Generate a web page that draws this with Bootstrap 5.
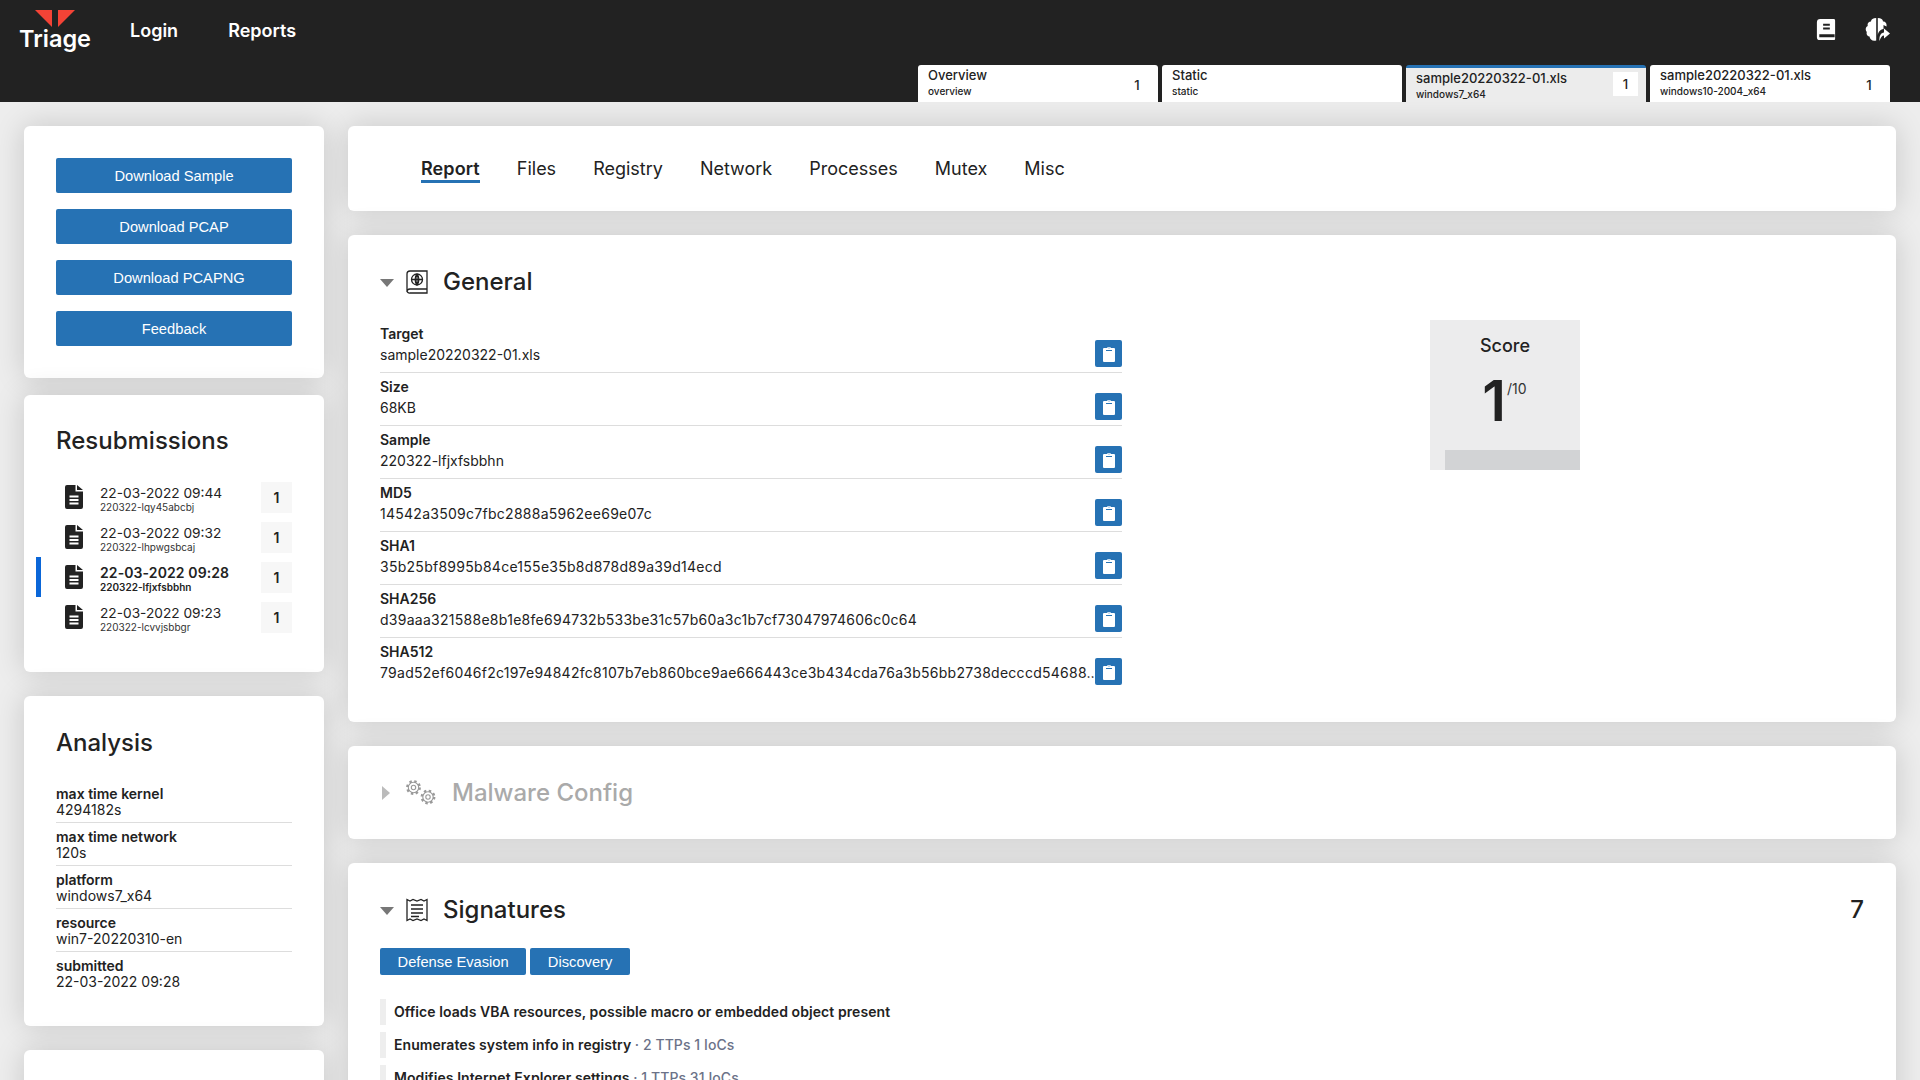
<!DOCTYPE html>
<html lang="en">
<head>
<meta charset="utf-8">
<title>Triage</title>
<link href="https://cdn.jsdelivr.net/npm/bootstrap@5.3.0/dist/css/bootstrap.min.css" rel="stylesheet">
<style>
html,body{height:100%;overflow:hidden}
body{font-family:Inter,"Liberation Sans",sans-serif;background:#ededed;color:#222;font-size:14px;line-height:17px}
.topbar{height:102px;background:#222;position:relative;padding:0 20px}
.brand{width:70px;padding-top:10px;color:#fff;display:block;text-decoration:none}
.brand svg{display:block;width:40px;height:17px;margin-left:15px}
.brand span{display:block;font-size:23.5px;line-height:24px;font-weight:600;margin-top:0;margin-left:-1px}
.toplink{color:#fff;font-size:18px;font-weight:600;line-height:22px;text-decoration:none}
.toplinks{gap:50px;margin-left:40px;padding-top:20px}
.topicons{gap:29px;padding-top:18px;position:absolute;right:30px;top:0}
.tabstrip{position:absolute;left:918px;top:65px;gap:4px}
.tabbox{width:240px;height:37px;background:#fff;border-radius:3px 3px 0 0;padding:2px 10px;display:flex;justify-content:space-between;align-items:flex-start;overflow:hidden}
.tabbox b{display:block;font-weight:500;font-size:13px;line-height:17px}
.tabbox small{display:block;font-size:10px;line-height:13px;font-weight:500;margin-top:1px}
.tabbox i{font-style:normal;font-size:13px;font-weight:500;width:24px;height:24px;display:block;text-align:center;line-height:24px;margin-top:6px;margin-right:-1px}
.tabbox.sel{background:#ececec;border-top:3px solid #2672b4;padding-top:2px;padding-right:8px}
.tabbox.sel i{background:#fff;margin-top:2px;margin-right:0;width:25px}
.shell{padding:24px;gap:24px;align-items:flex-start}
.rail{width:300px;flex:none}
.mainpane{flex:1;min-width:0}
.panel{background:#fff;border-radius:6px;box-shadow:0 0 30px rgba(0,0,0,.16)}
.rail .panel{margin-bottom:24px}
.rail .actions{margin-bottom:17px}
.mainpane .panel{margin-bottom:24px}
.actions{padding:32px;display:flex;flex-direction:column;gap:16px}
.bluebtn{background:#2672b4;border:0;border-radius:2px;color:#fff;font-family:"Liberation Sans",sans-serif;font-size:14.7px;height:35px;line-height:36px;padding:0;text-align:center;display:block}
.offtext{padding-left:10px}
.ptitle{font-size:24px;line-height:29px;font-weight:500;margin:0}
.resub{padding:31px 0 35px}
.resub .ptitle{padding-left:32px;margin-bottom:22px}
.rrow{height:40px;display:flex;align-items:center;padding-left:24px;padding-right:32px;border-left:5px solid transparent;margin-left:12px}
.rrow.sel{border-left-color:#0a66d8;font-weight:600}
.rtext{flex:1;padding-left:17px;padding-top:4px}
.rtext span{display:block;font-size:13.7px;line-height:16px}
.sel .rtext span{font-size:14px;letter-spacing:.1px}
.rtext small{display:block;font-size:10px;line-height:12px;color:#333}
.sel .rtext small{color:#222}
.rcount{width:31px;height:31px;background:#f7f7f7;text-align:center;line-height:31px;font-weight:600}
.analysis{padding:32px 32px 26px}
.analysis .ptitle{margin-bottom:28px}
.kv{height:38px;margin-bottom:5px;border-bottom:1px solid #ddd;line-height:16px}
.kv:last-child{border-bottom:0;margin-bottom:0;height:43px}
.kv b{display:block;font-weight:600;line-height:17px}
.stub{height:60px}
.tabsbar{height:85px;padding:0 73px;display:flex;align-items:center;gap:37px;font-size:18px}
.tabsbar a{color:#222;text-decoration:none;line-height:22px;border-bottom:3px solid transparent;margin-top:4px}
.tabsbar a.cur{font-weight:600;border-bottom-color:#2672b4;letter-spacing:.1px}
.sect{padding:32px}
.shead{display:flex;align-items:center;height:29px}
.caret{width:0;height:0;border-left:7px solid transparent;border-right:7px solid transparent;border-top:8px solid #777;margin-right:12px;margin-top:3px;flex:none}
.caretr{width:0;height:0;border-top:7px solid transparent;border-bottom:7px solid transparent;border-left:8px solid #bbb;margin-left:2px;margin-right:16px;flex:none}
.shead h2{font-size:24px;line-height:29px;font-weight:500;margin:0 0 0 15px}
.dim h2{color:#aaa;margin-left:16px}
.gen{display:flex;margin-top:24px;align-items:flex-start}
.fields{width:742px;flex:none}
.frow{height:53px;border-bottom:1px solid #ddd;display:flex;align-items:flex-end;padding-bottom:6px}
.frow:last-child{border-bottom:0;height:52px}
.frow>div{flex:1;min-width:0;padding-right:4px}
.frow b{display:block;font-weight:600;line-height:21px}
.frow span{display:block;line-height:22px;white-space:nowrap}
.frow span.hashval{letter-spacing:.27px}
.copybtn{width:27px;height:27px;background:#2672b4;border-radius:2px;display:flex;align-items:center;justify-content:center;flex:none;margin-bottom:-1px}
.scorebox{width:150px;height:150px;background:#ececed;margin-left:308px;margin-top:0;position:relative;text-align:center}
.scorebox h3{font-size:18px;line-height:22px;font-weight:500;margin:15px 0 0}
.scorefig{font-size:56px;line-height:60px;font-weight:600;margin-top:14px;position:relative;padding-right:22px}
.scorefig sup{font-size:14px;font-weight:400;position:absolute;top:9px;left:77px;line-height:17px;color:#333}
.scorebar{position:absolute;left:15px;right:0;bottom:0;height:20px;background:#d2d3d5}
.sigcount{margin-left:auto;font-size:24px;font-weight:500}
.tagline{display:flex;gap:4px;margin-top:24px;margin-bottom:24px}
.tagline .bluebtn{height:27px;line-height:28px;padding:0 17.6px}
.sigrow{border-left:6px solid #eee;height:26px;line-height:26px;padding-left:8px;font-weight:600;margin-bottom:7px;white-space:nowrap;letter-spacing:.07px}
.sigrow em{font-style:normal;font-weight:500;color:#6b7288}
</style>
</head>
<body>
<header class="topbar d-flex align-items-start">
  <a class="brand" href="#">
    <svg viewBox="0 0 40 17"><path d="M0 0H17V17ZM23 17V0H40Z" fill="#f44336"/></svg>
    <span>Triage</span>
  </a>
  <nav class="d-flex toplinks">
    <a class="toplink" href="#">Login</a>
    <a class="toplink" href="#">Reports</a>
  </nav>
  <div class="d-flex topicons">
    <svg width="20" height="23" viewBox="0 0 20 24"><path d="M4 1H18a1.500 1.500 0 0 1 1.500 1.500V22a1 1 0 0 1-1 1H3.500A3 3 0 0 1 .5 20V4.500A3.500 3.500 0 0 1 4 1Z" fill="#fff"/><path d="M7 6H14V8H7ZM7 10H14V12H7ZM3 17H19V20H3Z" fill="#222"/></svg>
    <svg width="25" height="23" viewBox="0 0 25 23" fill="#fff"><path d="M11.200 0C8 0 6 1.500 6 3.500 3.500 3.500 2 5.500 2.800 8 .5 9 0 12 1.800 14 1 16.500 2.500 18.500 4.500 18.500 5 21.500 7.500 23.500 11.200 22.500Z"/><path d="M12.800 0C16 0 18 1.500 18 3.500 20.500 3.500 22 5.500 21.500 8.500L18.500 7V11C15 11.500 13 14 12.800 18Z"/><path d="M14.500 23C14 18 16 14.500 19 14.500V10.500L25 15.500 19 20.500V17.500C17 17.500 15.500 19.500 14.500 23Z"/></svg>
  </div>
  <div class="d-flex tabstrip">
    <div class="tabbox"><div><b>Overview</b><small>overview</small></div><i>1</i></div>
    <div class="tabbox"><div><b>Static</b><small>static</small></div></div>
    <div class="tabbox sel"><div><b>sample20220322-01.xls</b><small>windows7_x64</small></div><i>1</i></div>
    <div class="tabbox"><div><b>sample20220322-01.xls</b><small>windows10-2004_x64</small></div><i>1</i></div>
  </div>
</header>
<div class="d-flex shell">
  <aside class="rail">
    <section class="panel actions">
      <a class="bluebtn text-decoration-none" href="#">Download Sample</a>
      <a class="bluebtn text-decoration-none" href="#">Download PCAP</a>
      <a class="bluebtn text-decoration-none offtext" href="#">Download PCAPNG</a>
      <a class="bluebtn text-decoration-none" href="#">Feedback</a>
    </section>
    <section class="panel resub">
      <h4 class="ptitle">Resubmissions</h4>
      <div class="rrow"><svg width="18" height="24" viewBox="0 0 18 24"><path d="M2 0H10.500V6.500H18V22a2 2 0 0 1-2 2H2a2 2 0 0 1-2-2V2A2 2 0 0 1 2 0ZM12 0L18 5H12Z" fill="#222"/><path d="M4.500 10.500H13.500V12.500H4.500ZM4.500 14H13.500V16H4.500ZM4.500 17.500H13.500V19.500H4.500Z" fill="#fff"/></svg><div class="rtext"><span>22-03-2022 09:44</span><small>220322-lqy45abcbj</small></div><div class="rcount">1</div></div>
      <div class="rrow"><svg width="18" height="24" viewBox="0 0 18 24"><path d="M2 0H10.500V6.500H18V22a2 2 0 0 1-2 2H2a2 2 0 0 1-2-2V2A2 2 0 0 1 2 0ZM12 0L18 5H12Z" fill="#222"/><path d="M4.500 10.500H13.500V12.500H4.500ZM4.500 14H13.500V16H4.500ZM4.500 17.500H13.500V19.500H4.500Z" fill="#fff"/></svg><div class="rtext"><span>22-03-2022 09:32</span><small>220322-lhpwgsbcaj</small></div><div class="rcount">1</div></div>
      <div class="rrow sel"><svg width="18" height="24" viewBox="0 0 18 24"><path d="M2 0H10.500V6.500H18V22a2 2 0 0 1-2 2H2a2 2 0 0 1-2-2V2A2 2 0 0 1 2 0ZM12 0L18 5H12Z" fill="#222"/><path d="M4.500 10.500H13.500V12.500H4.500ZM4.500 14H13.500V16H4.500ZM4.500 17.500H13.500V19.500H4.500Z" fill="#fff"/></svg><div class="rtext"><span>22-03-2022 09:28</span><small>220322-lfjxfsbbhn</small></div><div class="rcount">1</div></div>
      <div class="rrow"><svg width="18" height="24" viewBox="0 0 18 24"><path d="M2 0H10.500V6.500H18V22a2 2 0 0 1-2 2H2a2 2 0 0 1-2-2V2A2 2 0 0 1 2 0ZM12 0L18 5H12Z" fill="#222"/><path d="M4.500 10.500H13.500V12.500H4.500ZM4.500 14H13.500V16H4.500ZM4.500 17.500H13.500V19.500H4.500Z" fill="#fff"/></svg><div class="rtext"><span>22-03-2022 09:23</span><small>220322-lcvvjsbbgr</small></div><div class="rcount">1</div></div>
    </section>
    <section class="panel analysis">
      <h4 class="ptitle">Analysis</h4>
      <div class="kv"><b>max time kernel</b>4294182s</div>
      <div class="kv"><b>max time network</b>120s</div>
      <div class="kv"><b>platform</b>windows7_x64</div>
      <div class="kv"><b>resource</b>win7-20220310-en</div>
      <div class="kv"><b>submitted</b>22-03-2022 09:28</div>
    </section>
    <section class="panel stub"></section>
  </aside>
  <main class="mainpane">
    <section class="panel tabsbar">
      <a class="cur" href="#">Report</a><a href="#">Files</a><a href="#">Registry</a><a href="#">Network</a><a href="#">Processes</a><a href="#">Mutex</a><a href="#">Misc</a>
    </section>
    <section class="panel sect">
      <div class="shead"><span class="caret"></span>
        <svg width="22" height="24" viewBox="0 0 22 24" fill="none" stroke="#222" stroke-width="1.300"><path d="M4 1H21V19H4A3 3 0 0 0 1 22V4A3 3 0 0 1 4 1ZM1 20.500A2.500 2.500 0 0 0 4 23H21V19"/><circle cx="11" cy="9.500" r="5.500"/><path d="M5.500 9.500H16.500M11 4V15M11 4C8.500 7 8.500 12 11 15M11 4C13.500 7 13.500 12 11 15"/></svg>
        <h2>General</h2></div>
      <div class="gen">
        <div class="fields">
          <div class="frow"><div><b>Target</b><span>sample20220322-01.xls</span></div><a class="copybtn" href="#"><svg width="12" height="16" viewBox="0 0 12 16"><path d="M1 2H4C4 .5 8 .5 8 2H11a1 1 0 0 1 1 1V15a1 1 0 0 1-1 1H1a1 1 0 0 1-1-1V3a1 1 0 0 1 1-1Z" fill="#fff"/><path d="M3 4.500H9" stroke="#2672b4" stroke-width="1"/><path d="M6 1.500V2.500" stroke="#2672b4"/></svg></a></div>
          <div class="frow"><div><b>Size</b><span>68KB</span></div><a class="copybtn" href="#"><svg width="12" height="16" viewBox="0 0 12 16"><path d="M1 2H4C4 .5 8 .5 8 2H11a1 1 0 0 1 1 1V15a1 1 0 0 1-1 1H1a1 1 0 0 1-1-1V3a1 1 0 0 1 1-1Z" fill="#fff"/><path d="M3 4.500H9" stroke="#2672b4" stroke-width="1"/><path d="M6 1.500V2.500" stroke="#2672b4"/></svg></a></div>
          <div class="frow"><div><b>Sample</b><span>220322-lfjxfsbbhn</span></div><a class="copybtn" href="#"><svg width="12" height="16" viewBox="0 0 12 16"><path d="M1 2H4C4 .5 8 .5 8 2H11a1 1 0 0 1 1 1V15a1 1 0 0 1-1 1H1a1 1 0 0 1-1-1V3a1 1 0 0 1 1-1Z" fill="#fff"/><path d="M3 4.500H9" stroke="#2672b4" stroke-width="1"/><path d="M6 1.500V2.500" stroke="#2672b4"/></svg></a></div>
          <div class="frow"><div><b>MD5</b><span class="hashval">14542a3509c7fbc2888a5962ee69e07c</span></div><a class="copybtn" href="#"><svg width="12" height="16" viewBox="0 0 12 16"><path d="M1 2H4C4 .5 8 .5 8 2H11a1 1 0 0 1 1 1V15a1 1 0 0 1-1 1H1a1 1 0 0 1-1-1V3a1 1 0 0 1 1-1Z" fill="#fff"/><path d="M3 4.500H9" stroke="#2672b4" stroke-width="1"/><path d="M6 1.500V2.500" stroke="#2672b4"/></svg></a></div>
          <div class="frow"><div><b>SHA1</b><span class="hashval">35b25bf8995b84ce155e35b8d878d89a39d14ecd</span></div><a class="copybtn" href="#"><svg width="12" height="16" viewBox="0 0 12 16"><path d="M1 2H4C4 .5 8 .5 8 2H11a1 1 0 0 1 1 1V15a1 1 0 0 1-1 1H1a1 1 0 0 1-1-1V3a1 1 0 0 1 1-1Z" fill="#fff"/><path d="M3 4.500H9" stroke="#2672b4" stroke-width="1"/><path d="M6 1.500V2.500" stroke="#2672b4"/></svg></a></div>
          <div class="frow"><div><b>SHA256</b><span class="hashval">d39aaa321588e8b1e8fe694732b533be31c57b60a3c1b7cf73047974606c0c64</span></div><a class="copybtn" href="#"><svg width="12" height="16" viewBox="0 0 12 16"><path d="M1 2H4C4 .5 8 .5 8 2H11a1 1 0 0 1 1 1V15a1 1 0 0 1-1 1H1a1 1 0 0 1-1-1V3a1 1 0 0 1 1-1Z" fill="#fff"/><path d="M3 4.500H9" stroke="#2672b4" stroke-width="1"/><path d="M6 1.500V2.500" stroke="#2672b4"/></svg></a></div>
          <div class="frow"><div><b>SHA512</b><span class="hashval">79ad52ef6046f2c197e94842fc8107b7eb860bce9ae666443ce3b434cda76a3b56bb2738decccd54688…</span></div><a class="copybtn" href="#"><svg width="12" height="16" viewBox="0 0 12 16"><path d="M1 2H4C4 .5 8 .5 8 2H11a1 1 0 0 1 1 1V15a1 1 0 0 1-1 1H1a1 1 0 0 1-1-1V3a1 1 0 0 1 1-1Z" fill="#fff"/><path d="M3 4.500H9" stroke="#2672b4" stroke-width="1"/><path d="M6 1.500V2.500" stroke="#2672b4"/></svg></a></div>
        </div>
        <div class="scorebox"><h3>Score</h3><div class="scorefig">1<sup>/10</sup></div><div class="scorebar"></div></div>
      </div>
    </section>
    <section class="panel sect dim">
      <div class="shead"><span class="caretr"></span>
        <svg width="30" height="26" viewBox="0 0 30 26" fill="none" stroke="#999" stroke-width="1.100"><circle cx="7.500" cy="7.500" r="2.200"/><circle cx="7.500" cy="7.500" r="5.200"/><circle cx="7.500" cy="7.500" r="6.200" stroke-width="2.400" stroke-dasharray="2.400 2.470"/><circle cx="22" cy="17" r="2.200"/><circle cx="22" cy="17" r="5.200"/><circle cx="22" cy="17" r="6.200" stroke-width="2.400" stroke-dasharray="2.400 2.470"/></svg>
        <h2>Malware Config</h2></div>
    </section>
    <section class="panel sect">
      <div class="shead"><span class="caret"></span>
        <svg width="22" height="24" viewBox="0 0 22 24" fill="none" stroke="#222" stroke-width="1.300"><path d="M1 1.500L4 3 7 1.500 11 3 15 1.500 18 3 21 1.500V22.500L18 21 15 22.500 11 21 7 22.500 4 21 1 22.500Z"/><path d="M5 7H17M5 11H17M5 15H17M5 18.500H13"/></svg>
        <h2>Signatures</h2><span class="sigcount">7</span></div>
      <div class="tagline"><a class="bluebtn text-decoration-none" href="#">Defense Evasion</a><a class="bluebtn text-decoration-none" href="#">Discovery</a></div>
      <div class="sigrow">Office loads VBA resources, possible macro or embedded object present</div>
      <div class="sigrow">Enumerates system info in registry <em>· 2 TTPs 1 IoCs</em></div>
      <div class="sigrow">Modifies Internet Explorer settings <em>· 1 TTPs 31 IoCs</em></div>
    </section>
  </main>
</div>
</body>
</html>
